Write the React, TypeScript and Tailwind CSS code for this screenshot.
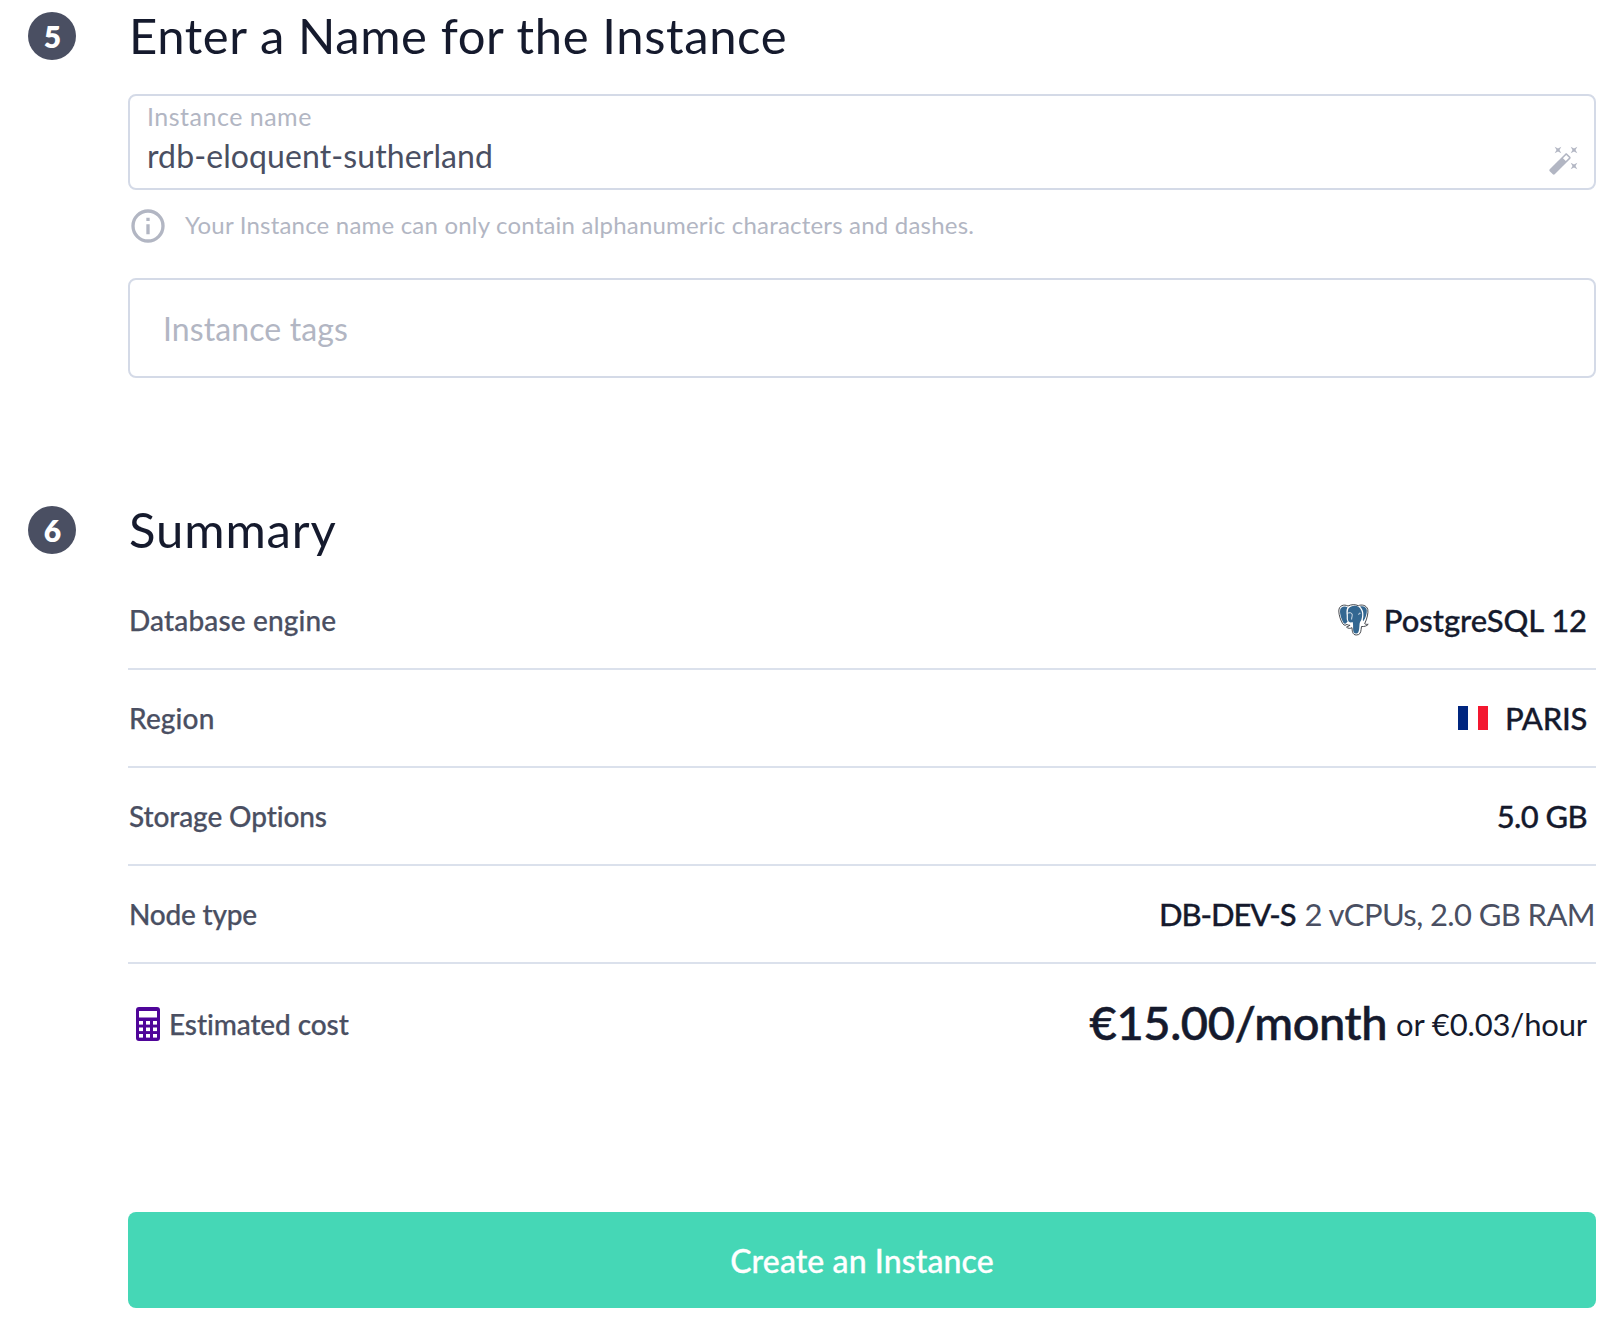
import type { ReactNode } from "react";

function StepHeader({ step, title, titleClass }: { step: number; title: string; titleClass: string }) {
  return (
    <div className="flex h-12 items-start">
      <div className="mr-[52px] flex size-12 shrink-0 items-center justify-center rounded-full bg-[#4a4f62] pl-px text-[30px] font-extrabold leading-none text-white">
        {step}
      </div>
      <h2 className={`whitespace-nowrap text-[49px] leading-[46px] text-[#151a2d] ${titleClass}`}>{title}</h2>
    </div>
  );
}

function SummaryRow({ label, children }: { label: ReactNode; children: ReactNode }) {
  return (
    <div className="flex h-[98px] items-center justify-between border-b-2 border-[#dbe1ec] whitespace-nowrap">
      <div className="pl-px text-[28px] font-medium text-[#4a4f62] [-webkit-text-stroke:0.25px]">{label}</div>
      <div className="flex items-center text-[31px] font-medium text-[#151a2d]">{children}</div>
    </div>
  );
}

function InfoIcon() {
  return (
    <svg className="size-10 shrink-0" viewBox="0 0 24 24" fill="#b2b6c3">
      <path d="M11 7h2v2h-2zm0 4h2v6h-2zM12 2a10 10 0 1 0 0 20 10 10 0 0 0 0-20zm0 18a8 8 0 1 1 0-16 8 8 0 0 1 0 16z" />
    </svg>
  );
}

function WandIcon() {
  return (
    <svg className="size-8 shrink-0" viewBox="0 0 24 24" fill="#b2b6c3">
      <path d="M7.5,5.6L5,7L6.4,4.5L5,2L7.5,3.4L10,2L8.6,4.5L10,7L7.5,5.6M19.5,15.4L22,14L20.6,16.5L22,19L19.5,17.6L17,19L18.4,16.5L17,14L19.5,15.4M22,2L20.6,4.5L22,7L19.5,5.6L17,7L18.4,4.5L17,2L19.5,3.4L22,2M13.34,12.78L15.78,10.34L13.66,8.22L11.22,10.66L13.34,12.78M14.37,7.29L16.71,9.63C17.1,10 17.1,10.65 16.71,11.04L5.04,22.71C4.65,23.1 4,23.1 3.63,22.71L1.29,20.37C0.9,20 0.9,19.35 1.29,18.96L12.96,7.29C13.35,6.9 14,6.9 14.37,7.29Z" />
    </svg>
  );
}

function CalculatorIcon() {
  return (
    <svg className="h-[34px] w-6 shrink-0" viewBox="0 0 24 34">
      <rect width="24" height="34" rx="3" fill="#4f0599" />
      <g fill="#fff">
        <rect x="3" y="4" width="18" height="6.5" />
        {[14, 20.5, 27].map((y) =>
          [3, 10, 17].map((x) => <rect key={`${x}-${y}`} x={x} y={y} width="4" height="3.6" />),
        )}
      </g>
    </svg>
  );
}

function PostgresIcon() {
  return (
    <svg className="h-8 w-[31px] shrink-0" viewBox="0 0 31 32">
      <path
        d="M10 2C6 0 .8 1.300 .8 7c0 4 2 10 4 12.800 1.500 2 3 1.700 4.200.4.800.9 2 1.300 3 .9-.800 1.700-3 .9-3.500 2 1.500 1.500 4 1.600 5.500.6.200 3 .3 7.300 4.300 7.300 3.500 0 4.500-2.200 4.800-5.500l.4-3c2.500.3 5.500-.5 6.700-2.200-1 .1-3 .1-3.500-.6C29 15 30.500 8.500 29.800 5.500 28.500 1 23.500.3 20.300 1.700 17 .2 13.500.3 10 2z"
        fill="#fff"
        stroke="#33373c"
        strokeWidth=".9"
      />
      <path d="M9.500 3.200C5.800 1.700 2 3 2 7.200c0 3.500 1.800 9 3.700 11.800 1 1.300 2 .8 3-.5l1-1.300C8.300 16 8.800 14 8.700 11.500 8.500 8.500 8 6 9.500 3.200z" fill="#336791" />
      <path d="M22 2.500c3-.9 6-.2 6.800 3.500.4 3-1.200 8.300-3.600 11.300-.6-1.200-.3-2.200.1-4.300.4-3.500.1-7.500-3.300-10.500z" fill="#336791" />
      <path d="M10.700 4.300C13 1.500 18 1 21 3.300c3 2.500 3.700 6.700 2.900 10.200-.5 2-.6 3-1.700 4.200-.9 1.500-.6 4-1 6.800-.3 3-1 5-3 5.100-2.200.1-3-1.500-3.100-4-.1-3.500.2-5.500-.5-7.600-1.200.7-3 .5-3.900-.5-1.200-1.500-.7-3.500-.8-6-.1-2.500-.4-5.200.8-7.200z" fill="#336791" />
      <path d="M9.500 9.300c1.800-.9 4-.8 4.600.7.500 2-.6 3.500-.5 5.500m8.900-6.200c-1.300-.3-2 .2-1.700 1.500" fill="none" stroke="#fff" strokeWidth=".8" />
    </svg>
  );
}

function FrenchFlag() {
  return (
    <div className="flex h-6 w-[30px]">
      <div className="w-2.5 bg-[#00267f]" />
      <div className="w-2.5 bg-white" />
      <div className="w-2.5 bg-[#f31830]" />
    </div>
  );
}

export default function App() {
  return (
    <main className="h-[1318px] w-[1612px] overflow-hidden bg-white pt-3 pr-4 pl-7 font-['Lato',sans-serif] [font-variant-ligatures:none]">
      <section>
        <StepHeader step={5} title="Enter a Name for the Instance" titleClass="pl-px tracking-[0.6px]" />
        <div className="mt-[34px] ml-[100px]">
          <div className="flex h-24 items-end justify-between rounded-lg border-2 border-[#d4dae7] pl-4">
            <div className="h-[86px] whitespace-nowrap pl-px">
              <div className="text-[25px] leading-7 tracking-[0.5px] text-[#b2b6c3]">Instance name</div>
              <div className="text-[32px] leading-[52px] tracking-[0.1px] text-[#4a4f62]">rdb-eloquent-sutherland</div>
            </div>
            <div className="pr-[14px] pb-3">
              <WandIcon />
            </div>
          </div>
          <div className="mt-4 flex h-10 items-center">
            <InfoIcon />
            <p className="whitespace-nowrap pb-[3px] pl-[17px] text-[24px] leading-7 tracking-[0.2px] text-[#b2b6c3]">
              Your Instance name can only contain alphanumeric characters and dashes.
            </p>
          </div>
          <div className="mt-8 flex h-[100px] items-center rounded-lg border-2 border-[#d4dae7] pl-[33px]">
            <div className="pt-0.5 text-[32px] leading-10 tracking-[0.1px] text-[#b2b6c3]">Instance tags</div>
          </div>
        </div>
      </section>

      <section className="mt-32">
        <StepHeader step={6} title="Summary" titleClass="pl-px tracking-[0.9px]" />
        <div className="mt-[18px] ml-[100px]">
          <SummaryRow label={<span className="tracking-[0.15px]">Database engine</span>}>
            <PostgresIcon />
            <span className="pr-[9px] pl-[15px] tracking-[-0.05px] [-webkit-text-stroke:0.3px]">PostgreSQL 12</span>
          </SummaryRow>
          <SummaryRow label={<span className="tracking-[0.15px]">Region</span>}>
            <FrenchFlag />
            <span className="pr-[9px] pl-[17px] tracking-[-0.3px] [-webkit-text-stroke:0.3px]">PARIS</span>
          </SummaryRow>
          <SummaryRow label={<span className="tracking-[-0.1px]">Storage Options</span>}>
            <span className="pr-[9px] tracking-[-0.6px] [-webkit-text-stroke:0.3px]">5.0 GB</span>
          </SummaryRow>
          <SummaryRow label={<span className="tracking-[-0.2px]">Node type</span>}>
            <span className="tracking-[-1.1px] [-webkit-text-stroke:0.3px]">DB-DEV-S</span>
            <span className="pr-px pl-[9px] font-normal tracking-[-0.6px] text-[#4a4f62]">2 vCPUs, 2.0 GB RAM</span>
          </SummaryRow>
          <div className="flex h-[120px] items-center justify-between whitespace-nowrap">
            <div className="flex items-center pl-2">
              <CalculatorIcon />
              <span className="pb-px pl-[9px] text-[28px] font-medium tracking-[-0.1px] text-[#4a4f62] [-webkit-text-stroke:0.25px]">
                Estimated cost
              </span>
            </div>
            <div className="flex items-center pr-[9px] text-[#151a2d]">
              <span className="pb-1 text-[47px] font-medium tracking-[-0.4px] [-webkit-text-stroke:0.6px]">€15.00/month</span>
              <span className="pl-[9px] text-[31px] tracking-[-0.15px]">or €0.03/hour</span>
            </div>
          </div>
        </div>
      </section>

      <button className="mt-32 ml-[100px] block h-24 w-[1468px] rounded-lg bg-[#45d7b6] pt-0.5 text-[32px] font-medium tracking-[0.1px] text-white [-webkit-text-stroke:0.3px]">
        Create an Instance
      </button>
    </main>
  );
}
